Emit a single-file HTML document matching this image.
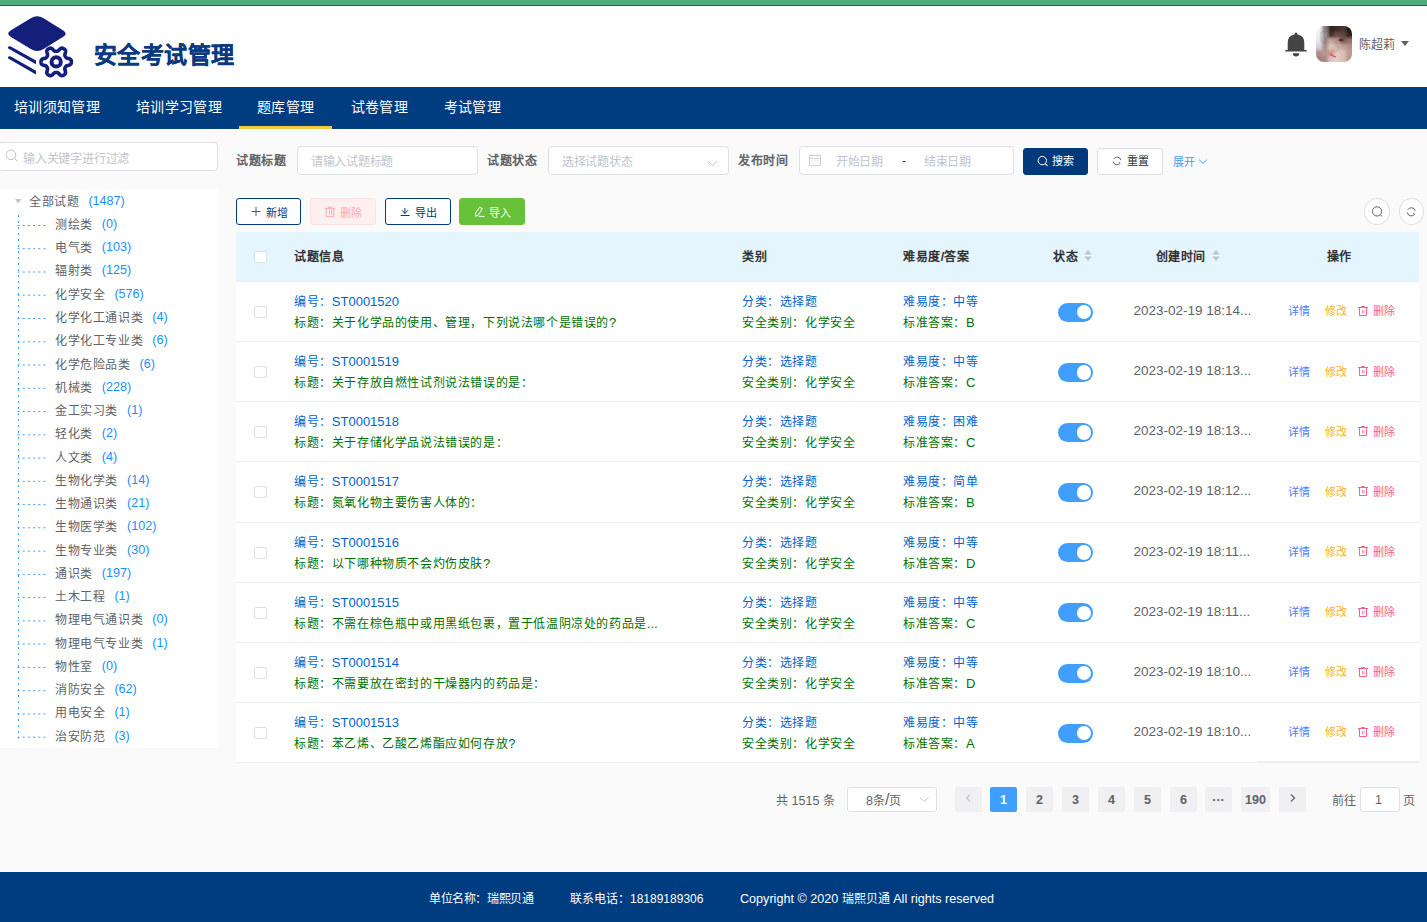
<!DOCTYPE html>
<html lang="zh-CN">
<head>
<meta charset="utf-8">
<style>
*{box-sizing:border-box;margin:0;padding:0}
html,body{width:1427px;height:922px;overflow:hidden}
body{position:relative;background:#fafafa;font-family:"Liberation Sans",sans-serif;color:#606266}
.a{position:absolute;white-space:nowrap}
svg.a{overflow:visible}
#topbar{left:0;top:0;width:1427px;height:6px;background:#50ac7a;border-bottom:1px solid #007a3a}
#hdr{left:0;top:6px;width:1427px;height:81px;background:#fff}
#nav{left:0;top:87px;width:1427px;height:42px;background:#003c80}
.nv{top:0;line-height:40px;color:#fff}
#navline{left:239px;top:126px;width:93px;height:3px;background:#f5c842}
#srch{left:-2px;top:142px;width:220px;height:29px;background:#fff;border:1px solid #dcdfe6;border-radius:4px}
#tree{left:0;top:189px;width:218px;height:559px;background:#fff}
.tr{line-height:18px;color:#606266}
.cnt{color:#1890ff;font-size:12.6px}
.lbl{font-weight:bold;color:#606266;line-height:28px;top:145.5px}
.inp{top:146px;height:28.5px;background:#fff;border:1px solid #dcdfe6;border-radius:4px}
.ph{top:146.5px;line-height:28px;color:#c0c4cc}
.btn{top:198px;height:27px;border-radius:3px;line-height:25px;border:1px solid #003a7d;background:#fff;color:#003a7d}
#tbl{left:236px;top:232px;width:1183px;height:531px;background:#fff}
#thead{left:236px;top:232px;width:1183px;height:49px;background:#e4f5fe}
.th{top:231px;line-height:49px;font-weight:bold;color:#303133}
.cb{width:12.5px;height:12px;border:1px solid #dcdfe6;border-radius:2px;background:#fff}
.rl{left:236px;width:1183px;height:1px;background:#ebeef5}
.cell{line-height:18px}
.bl{color:#0064cc}
.gr{color:#007000}
.sw{width:35px;height:19px;border-radius:10px;background:#409eff}
.sw i{position:absolute;right:2px;top:2.2px;width:14.5px;height:14.5px;border-radius:50%;background:#fff}
.dt{font-size:13.5px;color:#606266;line-height:18px}
.op{line-height:18px}
.pg{top:787px;width:27px;height:25px;background:#f0f0f2;border-radius:2px;font-size:12.6px;font-weight:bold;color:#606266;text-align:center;line-height:26px}
#footer{left:0;top:872px;width:1427px;height:50px;background:#003c80}
.ft{top:889.5px;font-size:12px;line-height:18px;color:#fff}
</style>
</head>
<body>
<div id="topbar" class="a"></div><div id="hdr" class="a"></div>
<svg class="a" style="left:0;top:0" width="90" height="87" viewBox="0 0 90 87"><path d="M10.96 30.24 L30.78 18.28 Q37.20 14.40 43.59 18.33 L62.86 30.19 Q68.40 33.60 62.88 37.03 L43.57 49.04 Q37.20 53.00 30.80 49.09 L10.95 36.99 Q5.40 33.60 10.96 30.24Z" fill="#131f7a"/><path d="M8.6 46.4 Q7.2 47.2 8.2 48.6 L36 64.2 L36 60.6 L10.8 46.6 Q9.6 46 8.6 46.4Z" fill="#131f7a"/><path d="M8.6 56.4 Q7.2 57.2 8.2 58.6 L36 74.4 L36 70.8 L10.8 56.6 Q9.6 56 8.6 56.4Z" fill="#131f7a"/><path d="M71.40 61.90 L71.39 61.50 L71.34 61.11 L71.27 60.71 L71.15 60.33 L70.97 59.96 L70.72 59.60 L70.36 59.27 L69.89 58.99 L69.31 58.75 L68.66 58.56 L68.01 58.40 L67.42 58.25 L66.94 58.10 L66.57 57.92 L66.27 57.73 L66.04 57.52 L65.85 57.30 L65.68 57.07 L65.52 56.84 L65.38 56.60 L65.25 56.36 L65.12 56.11 L65.01 55.85 L64.91 55.57 L64.85 55.26 L64.83 54.91 L64.87 54.50 L64.97 54.00 L65.13 53.42 L65.32 52.78 L65.48 52.12 L65.57 51.50 L65.56 50.95 L65.45 50.48 L65.27 50.08 L65.03 49.74 L64.76 49.45 L64.46 49.18 L64.14 48.95 L63.80 48.74 L63.45 48.55 L63.08 48.39 L62.71 48.26 L62.31 48.17 L61.90 48.14 L61.47 48.18 L61.01 48.32 L60.53 48.59 L60.03 48.97 L59.54 49.44 L59.07 49.93 L58.65 50.36 L58.28 50.70 L57.94 50.93 L57.62 51.09 L57.33 51.19 L57.04 51.25 L56.76 51.28 L56.48 51.30 L56.20 51.30 L55.92 51.30 L55.64 51.28 L55.36 51.25 L55.07 51.19 L54.78 51.09 L54.46 50.93 L54.12 50.70 L53.75 50.36 L53.33 49.93 L52.86 49.44 L52.37 48.97 L51.87 48.59 L51.39 48.32 L50.93 48.18 L50.50 48.14 L50.09 48.17 L49.69 48.26 L49.32 48.39 L48.95 48.55 L48.60 48.74 L48.26 48.95 L47.94 49.18 L47.64 49.45 L47.37 49.74 L47.13 50.08 L46.95 50.48 L46.84 50.95 L46.83 51.50 L46.92 52.12 L47.08 52.78 L47.27 53.42 L47.43 54.00 L47.53 54.50 L47.57 54.91 L47.55 55.26 L47.49 55.57 L47.39 55.85 L47.28 56.11 L47.15 56.36 L47.02 56.60 L46.88 56.84 L46.72 57.07 L46.55 57.30 L46.36 57.52 L46.13 57.73 L45.83 57.92 L45.46 58.10 L44.98 58.25 L44.39 58.40 L43.74 58.56 L43.09 58.75 L42.51 58.99 L42.04 59.27 L41.68 59.60 L41.43 59.96 L41.25 60.33 L41.13 60.71 L41.06 61.11 L41.01 61.50 L41.00 61.90 L41.01 62.30 L41.06 62.69 L41.13 63.09 L41.25 63.47 L41.43 63.84 L41.68 64.20 L42.04 64.53 L42.51 64.81 L43.09 65.05 L43.74 65.24 L44.39 65.40 L44.98 65.55 L45.46 65.70 L45.83 65.88 L46.13 66.07 L46.36 66.28 L46.55 66.50 L46.72 66.73 L46.88 66.96 L47.02 67.20 L47.15 67.44 L47.28 67.69 L47.39 67.95 L47.49 68.23 L47.55 68.54 L47.57 68.89 L47.53 69.30 L47.43 69.80 L47.27 70.38 L47.08 71.02 L46.92 71.68 L46.83 72.30 L46.84 72.85 L46.95 73.32 L47.13 73.72 L47.37 74.06 L47.64 74.35 L47.94 74.62 L48.26 74.85 L48.60 75.06 L48.95 75.25 L49.32 75.41 L49.69 75.54 L50.09 75.63 L50.50 75.66 L50.93 75.62 L51.39 75.48 L51.87 75.21 L52.37 74.83 L52.86 74.36 L53.33 73.87 L53.75 73.44 L54.12 73.10 L54.46 72.87 L54.78 72.71 L55.07 72.61 L55.36 72.55 L55.64 72.52 L55.92 72.50 L56.20 72.50 L56.48 72.50 L56.76 72.52 L57.04 72.55 L57.33 72.61 L57.62 72.71 L57.94 72.87 L58.28 73.10 L58.65 73.44 L59.07 73.87 L59.54 74.36 L60.03 74.83 L60.53 75.21 L61.01 75.48 L61.47 75.62 L61.90 75.66 L62.31 75.63 L62.71 75.54 L63.08 75.41 L63.45 75.25 L63.80 75.06 L64.14 74.85 L64.46 74.62 L64.76 74.35 L65.03 74.06 L65.27 73.72 L65.45 73.32 L65.56 72.85 L65.57 72.30 L65.48 71.68 L65.32 71.02 L65.13 70.38 L64.97 69.80 L64.87 69.30 L64.83 68.89 L64.85 68.54 L64.91 68.23 L65.01 67.95 L65.12 67.69 L65.25 67.44 L65.38 67.20 L65.52 66.96 L65.68 66.73 L65.85 66.50 L66.04 66.28 L66.27 66.07 L66.57 65.88 L66.94 65.70 L67.42 65.55 L68.01 65.40 L68.66 65.24 L69.31 65.05 L69.89 64.81 L70.36 64.53 L70.72 64.20 L70.97 63.84 L71.15 63.47 L71.27 63.09 L71.34 62.69 L71.39 62.30 L71.40 61.90Z" fill="none" stroke="#131f7a" stroke-width="3.6" stroke-linejoin="round"/><circle cx="56.2" cy="61.9" r="4.6" fill="none" stroke="#131f7a" stroke-width="4"/></svg>
<div class="a" style="left:94px;top:38px;line-height:34px;font-weight:bold;-webkit-text-stroke:0.3px #0b3a80;color:#0b3a80"><span style="font-size:23px;letter-spacing:0.4px">安全考试管理</span></div>
<svg class="a" style="left:1280px;top:28px" width="32" height="32" viewBox="0 0 32 32">
<path d="M16 4.6 Q17.5 4.6 17.6 6.6 Q24.3 7.6 24.3 14.6 L24.3 21.9 L26.7 21.9 L26.7 23.6 L5.3 23.6 L5.3 21.9 L7.7 21.9 L7.7 14.6 Q7.7 7.6 14.4 6.6 Q14.5 4.6 16 4.6Z" fill="#444"/>
<path d="M12.8 25.3 L19.2 25.3 Q19.1 28.6 16 28.6 Q12.9 28.6 12.8 25.3Z" fill="#444"/>
</svg>
<svg class="a" style="left:1316px;top:26px" width="36" height="36" viewBox="0 0 36 36">
<defs><clipPath id="av"><rect x="0" y="0" width="36" height="36" rx="8" ry="8"/></clipPath>
<filter id="bl" x="-30%" y="-30%" width="160%" height="160%"><feGaussianBlur stdDeviation="1.6"/></filter>
<filter id="bl2" x="-30%" y="-30%" width="160%" height="160%"><feGaussianBlur stdDeviation="0.5"/></filter></defs>
<g clip-path="url(#av)">
<g filter="url(#bl)"><rect x="-4" y="-4" width="10" height="10" fill="#f7f5f8"/><rect x="6" y="-4" width="6" height="10" fill="#8a7a7a"/><rect x="12" y="-4" width="6" height="10" fill="#2e201d"/><rect x="18" y="-4" width="6" height="10" fill="#3e2c28"/><rect x="24" y="-4" width="6" height="10" fill="#4a3632"/><rect x="30" y="-4" width="10" height="10" fill="#241816"/><rect x="-4" y="6" width="10" height="6" fill="#f0eef2"/><rect x="6" y="6" width="6" height="6" fill="#9a8a8a"/><rect x="12" y="6" width="6" height="6" fill="#3e2a26"/><rect x="18" y="6" width="6" height="6" fill="#6a4e48"/><rect x="24" y="6" width="6" height="6" fill="#5e463f"/><rect x="30" y="6" width="10" height="6" fill="#2e201e"/><rect x="-4" y="12" width="10" height="6" fill="#e6e4ec"/><rect x="6" y="12" width="6" height="6" fill="#9a8480"/><rect x="12" y="12" width="6" height="6" fill="#c8a8a0"/><rect x="18" y="12" width="6" height="6" fill="#b89088"/><rect x="24" y="12" width="6" height="6" fill="#7a5a55"/><rect x="30" y="12" width="10" height="6" fill="#9a7068"/><rect x="-4" y="18" width="10" height="6" fill="#d2cfda"/><rect x="6" y="18" width="6" height="6" fill="#a89088"/><rect x="12" y="18" width="6" height="6" fill="#e0c4bc"/><rect x="18" y="18" width="6" height="6" fill="#d0b4ac"/><rect x="24" y="18" width="6" height="6" fill="#c8a49a"/><rect x="30" y="18" width="10" height="6" fill="#b8908a"/><rect x="-4" y="24" width="10" height="6" fill="#b09088"/><rect x="6" y="24" width="6" height="6" fill="#b89890"/><rect x="12" y="24" width="6" height="6" fill="#d49088"/><rect x="18" y="24" width="6" height="6" fill="#e2c8c0"/><rect x="24" y="24" width="6" height="6" fill="#dcc0b8"/><rect x="30" y="24" width="10" height="6" fill="#c09a90"/><rect x="-4" y="30" width="10" height="10" fill="#a08078"/><rect x="6" y="30" width="6" height="10" fill="#a88880"/><rect x="12" y="30" width="6" height="10" fill="#d8c4c8"/><rect x="18" y="30" width="6" height="10" fill="#e4ccc6"/><rect x="24" y="30" width="6" height="10" fill="#d8bcb4"/><rect x="30" y="30" width="10" height="10" fill="#b8948c"/></g>
<g filter="url(#bl2)" fill="none">
<path d="M14.5 14 Q18 12.5 21.5 20 Q23 23 21 25 Q18 26 15 23" stroke="#8a8a90" stroke-width="0.6" opacity="0.7"/>
<path d="M22 21 L32 19.5" stroke="#9a9aa0" stroke-width="0.5"/>
<path d="M5 6 Q9 4 11 7 L9 17 Q6 18 5 15Z" stroke="#8a8088" stroke-width="0.6" opacity="0.7"/>
<path d="M14 28 Q16 30 20 31" stroke="#d84848" stroke-width="1.1"/>
<ellipse cx="25" cy="14" rx="2.4" ry="1.3" fill="#4a302c"/>
</g>
</g></svg>
<div class="a" style="left:1359px;top:35px;line-height:18px;color:#606266"><span style="font-size:12px;letter-spacing:0px">陈超莉</span></div>
<svg class="a" style="left:1400px;top:40px" width="10" height="7"><path d="M1 1 L9 1 L5 6Z" fill="#606266"/></svg>
<div id="nav" class="a">
<div class="a nv" style="left:14px"><span style="font-size:14px;letter-spacing:0.35px">培训须知管理</span></div>
<div class="a nv" style="left:136px"><span style="font-size:14px;letter-spacing:0.35px">培训学习管理</span></div>
<div class="a nv" style="left:257px"><span style="font-size:14px;letter-spacing:0.35px">题库管理</span></div>
<div class="a nv" style="left:350.5px"><span style="font-size:14px;letter-spacing:0.35px">试卷管理</span></div>
<div class="a nv" style="left:443.5px"><span style="font-size:14px;letter-spacing:0.35px">考试管理</span></div>
</div><div id="navline" class="a"></div>
<div id="srch" class="a"></div>
<svg class="a" style="left:0;top:140px" width="24" height="28"><circle cx="11" cy="14.8" r="4.8" fill="none" stroke="#c0c4cc" stroke-width="1"/><path d="M14.6 18.4 L17 20.8" stroke="#c0c4cc" stroke-width="1.1"/></svg>
<div class="a ph" style="left:23px;top:143.5px"><span style="font-size:12px;letter-spacing:-0.2px">输入关键字进行过滤</span></div>
<div id="tree" class="a"></div>
<div class="a tr" style="left:29px;top:191.70px"><span style="font-size:12px;letter-spacing:0.6px">全部试题</span><span class="cnt" style="margin-left:9px;position:relative;top:-1px">(1487)</span></div>
<div class="a tr" style="left:55px;top:214.96px"><span style="font-size:12px;letter-spacing:0.6px">测绘类</span><span class="cnt" style="margin-left:9px;position:relative;top:-1px">(0)</span></div>
<div class="a tr" style="left:55px;top:238.22px"><span style="font-size:12px;letter-spacing:0.6px">电气类</span><span class="cnt" style="margin-left:9px;position:relative;top:-1px">(103)</span></div>
<div class="a tr" style="left:55px;top:261.48px"><span style="font-size:12px;letter-spacing:0.6px">辐射类</span><span class="cnt" style="margin-left:9px;position:relative;top:-1px">(125)</span></div>
<div class="a tr" style="left:55px;top:284.74px"><span style="font-size:12px;letter-spacing:0.6px">化学安全</span><span class="cnt" style="margin-left:9px;position:relative;top:-1px">(576)</span></div>
<div class="a tr" style="left:55px;top:308.00px"><span style="font-size:12px;letter-spacing:0.6px">化学化工通识类</span><span class="cnt" style="margin-left:9px;position:relative;top:-1px">(4)</span></div>
<div class="a tr" style="left:55px;top:331.26px"><span style="font-size:12px;letter-spacing:0.6px">化学化工专业类</span><span class="cnt" style="margin-left:9px;position:relative;top:-1px">(6)</span></div>
<div class="a tr" style="left:55px;top:354.52px"><span style="font-size:12px;letter-spacing:0.6px">化学危险品类</span><span class="cnt" style="margin-left:9px;position:relative;top:-1px">(6)</span></div>
<div class="a tr" style="left:55px;top:377.78px"><span style="font-size:12px;letter-spacing:0.6px">机械类</span><span class="cnt" style="margin-left:9px;position:relative;top:-1px">(228)</span></div>
<div class="a tr" style="left:55px;top:401.04px"><span style="font-size:12px;letter-spacing:0.6px">金工实习类</span><span class="cnt" style="margin-left:9px;position:relative;top:-1px">(1)</span></div>
<div class="a tr" style="left:55px;top:424.30px"><span style="font-size:12px;letter-spacing:0.6px">轻化类</span><span class="cnt" style="margin-left:9px;position:relative;top:-1px">(2)</span></div>
<div class="a tr" style="left:55px;top:447.56px"><span style="font-size:12px;letter-spacing:0.6px">人文类</span><span class="cnt" style="margin-left:9px;position:relative;top:-1px">(4)</span></div>
<div class="a tr" style="left:55px;top:470.82px"><span style="font-size:12px;letter-spacing:0.6px">生物化学类</span><span class="cnt" style="margin-left:9px;position:relative;top:-1px">(14)</span></div>
<div class="a tr" style="left:55px;top:494.08px"><span style="font-size:12px;letter-spacing:0.6px">生物通识类</span><span class="cnt" style="margin-left:9px;position:relative;top:-1px">(21)</span></div>
<div class="a tr" style="left:55px;top:517.34px"><span style="font-size:12px;letter-spacing:0.6px">生物医学类</span><span class="cnt" style="margin-left:9px;position:relative;top:-1px">(102)</span></div>
<div class="a tr" style="left:55px;top:540.60px"><span style="font-size:12px;letter-spacing:0.6px">生物专业类</span><span class="cnt" style="margin-left:9px;position:relative;top:-1px">(30)</span></div>
<div class="a tr" style="left:55px;top:563.86px"><span style="font-size:12px;letter-spacing:0.6px">通识类</span><span class="cnt" style="margin-left:9px;position:relative;top:-1px">(197)</span></div>
<div class="a tr" style="left:55px;top:587.12px"><span style="font-size:12px;letter-spacing:0.6px">土木工程</span><span class="cnt" style="margin-left:9px;position:relative;top:-1px">(1)</span></div>
<div class="a tr" style="left:55px;top:610.38px"><span style="font-size:12px;letter-spacing:0.6px">物理电气通识类</span><span class="cnt" style="margin-left:9px;position:relative;top:-1px">(0)</span></div>
<div class="a tr" style="left:55px;top:633.64px"><span style="font-size:12px;letter-spacing:0.6px">物理电气专业类</span><span class="cnt" style="margin-left:9px;position:relative;top:-1px">(1)</span></div>
<div class="a tr" style="left:55px;top:656.90px"><span style="font-size:12px;letter-spacing:0.6px">物性室</span><span class="cnt" style="margin-left:9px;position:relative;top:-1px">(0)</span></div>
<div class="a tr" style="left:55px;top:680.16px"><span style="font-size:12px;letter-spacing:0.6px">消防安全</span><span class="cnt" style="margin-left:9px;position:relative;top:-1px">(62)</span></div>
<div class="a tr" style="left:55px;top:703.42px"><span style="font-size:12px;letter-spacing:0.6px">用电安全</span><span class="cnt" style="margin-left:9px;position:relative;top:-1px">(1)</span></div>
<div class="a tr" style="left:55px;top:726.68px"><span style="font-size:12px;letter-spacing:0.6px">治安防范</span><span class="cnt" style="margin-left:9px;position:relative;top:-1px">(3)</span></div>
<svg class="a" style="left:0;top:189px" width="218" height="559"><path d="M15 10.0 L21.5 10.0 L18.25 14.5 Z" fill="#c0c4cc"/><line x1="17.5" y1="36.5" x2="46" y2="36.5" stroke="#409eff" stroke-width="1" stroke-dasharray="2 3.2"/><line x1="17.5" y1="59.7" x2="46" y2="59.7" stroke="#409eff" stroke-width="1" stroke-dasharray="2 3.2"/><line x1="17.5" y1="83.0" x2="46" y2="83.0" stroke="#409eff" stroke-width="1" stroke-dasharray="2 3.2"/><line x1="17.5" y1="106.2" x2="46" y2="106.2" stroke="#409eff" stroke-width="1" stroke-dasharray="2 3.2"/><line x1="17.5" y1="129.5" x2="46" y2="129.5" stroke="#409eff" stroke-width="1" stroke-dasharray="2 3.2"/><line x1="17.5" y1="152.8" x2="46" y2="152.8" stroke="#409eff" stroke-width="1" stroke-dasharray="2 3.2"/><line x1="17.5" y1="176.0" x2="46" y2="176.0" stroke="#409eff" stroke-width="1" stroke-dasharray="2 3.2"/><line x1="17.5" y1="199.3" x2="46" y2="199.3" stroke="#409eff" stroke-width="1" stroke-dasharray="2 3.2"/><line x1="17.5" y1="222.5" x2="46" y2="222.5" stroke="#409eff" stroke-width="1" stroke-dasharray="2 3.2"/><line x1="17.5" y1="245.8" x2="46" y2="245.8" stroke="#409eff" stroke-width="1" stroke-dasharray="2 3.2"/><line x1="17.5" y1="269.1" x2="46" y2="269.1" stroke="#409eff" stroke-width="1" stroke-dasharray="2 3.2"/><line x1="17.5" y1="292.3" x2="46" y2="292.3" stroke="#409eff" stroke-width="1" stroke-dasharray="2 3.2"/><line x1="17.5" y1="315.6" x2="46" y2="315.6" stroke="#409eff" stroke-width="1" stroke-dasharray="2 3.2"/><line x1="17.5" y1="338.8" x2="46" y2="338.8" stroke="#409eff" stroke-width="1" stroke-dasharray="2 3.2"/><line x1="17.5" y1="362.1" x2="46" y2="362.1" stroke="#409eff" stroke-width="1" stroke-dasharray="2 3.2"/><line x1="17.5" y1="385.4" x2="46" y2="385.4" stroke="#409eff" stroke-width="1" stroke-dasharray="2 3.2"/><line x1="17.5" y1="408.6" x2="46" y2="408.6" stroke="#409eff" stroke-width="1" stroke-dasharray="2 3.2"/><line x1="17.5" y1="431.9" x2="46" y2="431.9" stroke="#409eff" stroke-width="1" stroke-dasharray="2 3.2"/><line x1="17.5" y1="455.1" x2="46" y2="455.1" stroke="#409eff" stroke-width="1" stroke-dasharray="2 3.2"/><line x1="17.5" y1="478.4" x2="46" y2="478.4" stroke="#409eff" stroke-width="1" stroke-dasharray="2 3.2"/><line x1="17.5" y1="501.7" x2="46" y2="501.7" stroke="#409eff" stroke-width="1" stroke-dasharray="2 3.2"/><line x1="17.5" y1="524.9" x2="46" y2="524.9" stroke="#409eff" stroke-width="1" stroke-dasharray="2 3.2"/><line x1="17.5" y1="548.2" x2="46" y2="548.2" stroke="#409eff" stroke-width="1" stroke-dasharray="2 3.2"/><line x1="18.5" y1="26.0" x2="18.5" y2="549.5" stroke="#409eff" stroke-width="1" stroke-dasharray="2 4"/></svg>
<div class="a lbl" style="left:236px"><span style="font-size:12px;letter-spacing:0.6px">试题标题</span></div>
<div class="a inp" style="left:297px;width:181px"></div><div class="a ph" style="left:311px"><span style="font-size:12px;letter-spacing:-0.3px">请输入试题标题</span></div>
<div class="a lbl" style="left:487px"><span style="font-size:12px;letter-spacing:0.6px">试题状态</span></div>
<div class="a inp" style="left:548px;width:181px"></div><div class="a ph" style="left:562px"><span style="font-size:12px;letter-spacing:-0.3px">选择试题状态</span></div>
<svg class="a" style="left:700px;top:150px" width="24" height="20"><path d="M8 11 L12.5 15.5 L17 11" fill="none" stroke="#c0c4cc" stroke-width="1"/></svg>
<div class="a lbl" style="left:738px"><span style="font-size:12px;letter-spacing:0.6px">发布时间</span></div>
<div class="a inp" style="left:799px;width:215px"></div>
<svg class="a" style="left:806px;top:150px" width="18" height="20"><g fill="none" stroke="#cfd2d9" stroke-width="1"><rect x="3.5" y="5.5" width="11" height="10"/><path d="M3.5 8.5 H14.5 M6.5 4 V6.5 M11.5 4 V6.5"/></g><g fill="#cfd2d9"><rect x="5.5" y="10" width="1" height="1"/><rect x="8.5" y="10" width="1" height="1"/><rect x="11.5" y="10" width="1" height="1"/><rect x="5.5" y="12.5" width="1" height="1"/><rect x="8.5" y="12.5" width="1" height="1"/><rect x="11.5" y="12.5" width="1" height="1"/></g></svg>
<div class="a ph" style="left:836px"><span style="font-size:12px;letter-spacing:-0.3px">开始日期</span></div><div class="a ph" style="left:902px;color:#303133;font-size:12px">-</div><div class="a ph" style="left:924px"><span style="font-size:12px;letter-spacing:-0.3px">结束日期</span></div>
<div class="a btn" style="left:1023px;top:148px;width:65px;background:#003a7d;color:#fff"><span class="a" style="left:28px;top:-2px;font-weight:500"><span style="font-size:11px;letter-spacing:0px">搜索</span></span></div>
<svg class="a" style="left:1034px;top:152px" width="16" height="18"><circle cx="8.3" cy="8.6" r="4.2" fill="none" stroke="#fff" stroke-width="1"/><path d="M11.3 11.6 L13.5 13.8" stroke="#fff" stroke-width="1.1"/></svg>
<div class="a btn" style="left:1097px;top:148px;width:66px;border-color:#dcdfe6;color:#606266"><span class="a" style="left:29px;top:-2px;color:#303133"><span style="font-size:11px;letter-spacing:0px">重置</span></span></div>
<svg class="a" style="left:1110px;top:154px" width="14" height="14"><g fill="none" stroke="#606266" stroke-width="1"><path d="M3.62 5.05 A3.9 3.9 0 0 1 10.77 5.99 M3.16 7.68 A3.9 3.9 0 0 0 10.19 9.24 L8.79 8.24"/></g></svg>
<div class="a" style="left:1173px;top:146.5px;line-height:28px;color:#409eff"><span style="font-size:11px;letter-spacing:0px">展开</span></div>
<svg class="a" style="left:1196px;top:156px" width="14" height="10"><path d="M3 3.6 L7 7.4 L11 3.6" fill="none" stroke="#409eff" stroke-width="1"/></svg>
<div class="a btn" style="left:236px;width:65px;"><span class="a" style="left:29px;top:-0.5px;font-weight:500"><span style="font-size:11px;letter-spacing:0px">新增</span></span></div>
<svg class="a" style="left:248px;top:204px" width="16" height="16"><path d="M3.6 7.5 H12.5 M8 3 V12" stroke="#003a7d" stroke-width="0.8"/></svg>
<div class="a btn" style="left:310px;width:66px;background:#fef0f0;border-color:#fde2e2;color:#f9a9a9"><span class="a" style="left:29px;top:0"><span style="font-size:11px;letter-spacing:0px">删除</span></span></div>
<svg class="a" style="left:320px;top:200px" width="20" height="22"><g fill="none" stroke="#f9a9a9" stroke-width="1"><path d="M5.1 8.4 H14.9 M8.1 8.3 V7.2 H11.9 V8.3"/><path d="M6.3 8.4 V16.7 H13.8 V8.4"/><path d="M9.5 10 V14.5 M11.5 10 V14.5"/></g></svg>
<div class="a btn" style="left:385px;width:66px;"><span class="a" style="left:29px;top:-0.5px;font-weight:500"><span style="font-size:11px;letter-spacing:0px">导出</span></span></div>
<svg class="a" style="left:395px;top:200px" width="20" height="22"><g fill="none" stroke="#003a7d" stroke-width="1"><path d="M9.9 7.9 V13.6 M6.9 10.3 L9.9 13.4 L12.9 10.3"/><path d="M5.7 15.5 H14.6"/></g></svg>
<div class="a btn" style="left:459px;width:66px;background:#67c23a;border-color:#67c23a;color:#fff"><span class="a" style="left:29px;top:-0.5px;font-weight:500"><span style="font-size:11px;letter-spacing:0px">导入</span></span></div>
<svg class="a" style="left:470px;top:200px" width="20" height="22"><g fill="none" stroke="#fff" stroke-width="1"><path d="M5.5 16.3 L5.6 13 L9.6 7.2 L12.4 8.6 L8.2 15.2Z"/><path d="M8.6 16.4 H14.6"/></g></svg>
<div class="a" style="left:1364px;top:198px;width:26px;height:26.5px;border:1px solid #dcdfe6;border-radius:50%;background:#fff"></div>
<div class="a" style="left:1399px;top:198px;width:25px;height:26.5px;border:1px solid #dcdfe6;border-radius:50%;background:#fff"></div>
<svg class="a" style="left:1364px;top:198px" width="64" height="27"><g fill="none" stroke="#606266" stroke-width="1"><circle cx="13" cy="13.4" r="4.6"/><path d="M16.3 16.7 L18.2 18.5"/><path d="M43.75 11.75 A4.1 4.1 0 0 1 51.26 12.74 M43.26 14.51 A4.1 4.1 0 0 0 50.66 16.15 L49.26 15.15"/></g></svg>
<div id="tbl" class="a"></div><div id="thead" class="a"></div><div class="a rl" style="top:281px"></div>
<div class="a cb" style="left:254.3px;top:251.3px"></div>
<div class="a th" style="left:294px"><span style="font-size:12px;letter-spacing:0.6px">试题信息</span></div>
<div class="a th" style="left:742px"><span style="font-size:12px;letter-spacing:0.6px">类别</span></div>
<div class="a th" style="left:903px"><span style="font-size:12px;letter-spacing:0.6px">难易度</span><span style="font-size:12.6px">/</span><span style="font-size:12px;letter-spacing:0.6px">答案</span></div>
<div class="a th" style="left:1053px"><span style="font-size:12px;letter-spacing:0.6px">状态</span></div>
<div class="a th" style="left:1155.5px"><span style="font-size:12px;letter-spacing:0.6px">创建时间</span></div>
<div class="a th" style="left:1326.5px"><span style="font-size:12px;letter-spacing:0.6px">操作</span></div>
<svg class="a" style="left:1084px;top:248px" width="10" height="16"><path d="M0.2 6.6 L7.8 6.6 L4 2Z M0.2 8.6 L7.8 8.6 L4 13Z" fill="#c0c4cc"/></svg>
<svg class="a" style="left:1212px;top:248px" width="10" height="16"><path d="M0.2 6.6 L7.8 6.6 L4 2Z M0.2 8.6 L7.8 8.6 L4 13Z" fill="#c0c4cc"/></svg>
<div class="a rl" style="top:341px"></div>
<div class="a cb" style="left:254.3px;top:306.0px"></div>
<div class="a cell bl" style="left:294px;top:292.0px"><span style="font-size:12px;letter-spacing:0.6px">编号：</span><span style="font-size:13px">ST0001520</span></div>
<div class="a cell gr" style="left:294px;top:313.0px"><span style="font-size:12px;letter-spacing:0.6px">标题：关于化学品的使用、管理，下列说法哪个是错误的</span><span style="font-size:13px">?</span></div>
<div class="a cell bl" style="left:742px;top:292.0px"><span style="font-size:12px;letter-spacing:0.6px">分类：选择题</span></div>
<div class="a cell gr" style="left:742px;top:313.0px"><span style="font-size:12px;letter-spacing:0.6px">安全类别：化学安全</span></div>
<div class="a cell bl" style="left:903px;top:292.0px"><span style="font-size:12px;letter-spacing:0.6px">难易度：中等</span></div>
<div class="a cell gr" style="left:903px;top:313.0px"><span style="font-size:12px;letter-spacing:0.6px">标准答案：</span><span style="font-size:13px">B</span></div>
<div class="a sw" style="left:1058px;top:302.8px"><i></i></div>
<div class="a dt" style="left:1133.5px;top:302.0px">2023-02-19 18:14...</div>
<div class="a op" style="left:1288px;top:301.4px;color:#4a7bff"><span style="font-size:11px;letter-spacing:0px">详情</span></div>
<div class="a op" style="left:1325px;top:301.4px;color:#fbb020"><span style="font-size:11px;letter-spacing:0px">修改</span></div>
<svg class="a" style="left:1350px;top:300px" width="20" height="20"><g fill="none" stroke="#f7638a" stroke-width="1"><path d="M8 7.5 H18 M11.5 7 V6.5 H14.5 V7"/><path d="M9.5 7.5 V15.5 H16.5 V7.5"/><path d="M12.5 10 V13.5 M14 10 V13.5" stroke-width="0.7"/></g></svg>
<div class="a op" style="left:1373px;top:301.4px;color:#f7638a"><span style="font-size:11px;letter-spacing:0px">删除</span></div>
<div class="a rl" style="top:401px"></div>
<div class="a cb" style="left:254.3px;top:366.1px"></div>
<div class="a cell bl" style="left:294px;top:352.1px"><span style="font-size:12px;letter-spacing:0.6px">编号：</span><span style="font-size:13px">ST0001519</span></div>
<div class="a cell gr" style="left:294px;top:373.1px"><span style="font-size:12px;letter-spacing:0.6px">标题：关于存放自燃性试剂说法错误的是：</span></div>
<div class="a cell bl" style="left:742px;top:352.1px"><span style="font-size:12px;letter-spacing:0.6px">分类：选择题</span></div>
<div class="a cell gr" style="left:742px;top:373.1px"><span style="font-size:12px;letter-spacing:0.6px">安全类别：化学安全</span></div>
<div class="a cell bl" style="left:903px;top:352.1px"><span style="font-size:12px;letter-spacing:0.6px">难易度：中等</span></div>
<div class="a cell gr" style="left:903px;top:373.1px"><span style="font-size:12px;letter-spacing:0.6px">标准答案：</span><span style="font-size:13px">C</span></div>
<div class="a sw" style="left:1058px;top:362.9px"><i></i></div>
<div class="a dt" style="left:1133.5px;top:362.1px">2023-02-19 18:13...</div>
<div class="a op" style="left:1288px;top:361.5px;color:#4a7bff"><span style="font-size:11px;letter-spacing:0px">详情</span></div>
<div class="a op" style="left:1325px;top:361.5px;color:#fbb020"><span style="font-size:11px;letter-spacing:0px">修改</span></div>
<svg class="a" style="left:1350px;top:360px" width="20" height="20"><g fill="none" stroke="#f7638a" stroke-width="1"><path d="M8 7.5 H18 M11.5 7 V6.5 H14.5 V7"/><path d="M9.5 7.5 V15.5 H16.5 V7.5"/><path d="M12.5 10 V13.5 M14 10 V13.5" stroke-width="0.7"/></g></svg>
<div class="a op" style="left:1373px;top:361.5px;color:#f7638a"><span style="font-size:11px;letter-spacing:0px">删除</span></div>
<div class="a rl" style="top:461px"></div>
<div class="a cb" style="left:254.3px;top:426.2px"></div>
<div class="a cell bl" style="left:294px;top:412.2px"><span style="font-size:12px;letter-spacing:0.6px">编号：</span><span style="font-size:13px">ST0001518</span></div>
<div class="a cell gr" style="left:294px;top:433.2px"><span style="font-size:12px;letter-spacing:0.6px">标题：关于存储化学品说法错误的是：</span></div>
<div class="a cell bl" style="left:742px;top:412.2px"><span style="font-size:12px;letter-spacing:0.6px">分类：选择题</span></div>
<div class="a cell gr" style="left:742px;top:433.2px"><span style="font-size:12px;letter-spacing:0.6px">安全类别：化学安全</span></div>
<div class="a cell bl" style="left:903px;top:412.2px"><span style="font-size:12px;letter-spacing:0.6px">难易度：困难</span></div>
<div class="a cell gr" style="left:903px;top:433.2px"><span style="font-size:12px;letter-spacing:0.6px">标准答案：</span><span style="font-size:13px">C</span></div>
<div class="a sw" style="left:1058px;top:423.1px"><i></i></div>
<div class="a dt" style="left:1133.5px;top:422.2px">2023-02-19 18:13...</div>
<div class="a op" style="left:1288px;top:421.6px;color:#4a7bff"><span style="font-size:11px;letter-spacing:0px">详情</span></div>
<div class="a op" style="left:1325px;top:421.6px;color:#fbb020"><span style="font-size:11px;letter-spacing:0px">修改</span></div>
<svg class="a" style="left:1350px;top:420px" width="20" height="20"><g fill="none" stroke="#f7638a" stroke-width="1"><path d="M8 7.5 H18 M11.5 7 V6.5 H14.5 V7"/><path d="M9.5 7.5 V15.5 H16.5 V7.5"/><path d="M12.5 10 V13.5 M14 10 V13.5" stroke-width="0.7"/></g></svg>
<div class="a op" style="left:1373px;top:421.6px;color:#f7638a"><span style="font-size:11px;letter-spacing:0px">删除</span></div>
<div class="a rl" style="top:522px"></div>
<div class="a cb" style="left:254.3px;top:486.4px"></div>
<div class="a cell bl" style="left:294px;top:472.4px"><span style="font-size:12px;letter-spacing:0.6px">编号：</span><span style="font-size:13px">ST0001517</span></div>
<div class="a cell gr" style="left:294px;top:493.4px"><span style="font-size:12px;letter-spacing:0.6px">标题：氮氧化物主要伤害人体的：</span></div>
<div class="a cell bl" style="left:742px;top:472.4px"><span style="font-size:12px;letter-spacing:0.6px">分类：选择题</span></div>
<div class="a cell gr" style="left:742px;top:493.4px"><span style="font-size:12px;letter-spacing:0.6px">安全类别：化学安全</span></div>
<div class="a cell bl" style="left:903px;top:472.4px"><span style="font-size:12px;letter-spacing:0.6px">难易度：简单</span></div>
<div class="a cell gr" style="left:903px;top:493.4px"><span style="font-size:12px;letter-spacing:0.6px">标准答案：</span><span style="font-size:13px">B</span></div>
<div class="a sw" style="left:1058px;top:483.2px"><i></i></div>
<div class="a dt" style="left:1133.5px;top:482.4px">2023-02-19 18:12...</div>
<div class="a op" style="left:1288px;top:481.8px;color:#4a7bff"><span style="font-size:11px;letter-spacing:0px">详情</span></div>
<div class="a op" style="left:1325px;top:481.8px;color:#fbb020"><span style="font-size:11px;letter-spacing:0px">修改</span></div>
<svg class="a" style="left:1350px;top:480px" width="20" height="20"><g fill="none" stroke="#f7638a" stroke-width="1"><path d="M8 7.5 H18 M11.5 7 V6.5 H14.5 V7"/><path d="M9.5 7.5 V15.5 H16.5 V7.5"/><path d="M12.5 10 V13.5 M14 10 V13.5" stroke-width="0.7"/></g></svg>
<div class="a op" style="left:1373px;top:481.8px;color:#f7638a"><span style="font-size:11px;letter-spacing:0px">删除</span></div>
<div class="a rl" style="top:582px"></div>
<div class="a cb" style="left:254.3px;top:546.5px"></div>
<div class="a cell bl" style="left:294px;top:532.5px"><span style="font-size:12px;letter-spacing:0.6px">编号：</span><span style="font-size:13px">ST0001516</span></div>
<div class="a cell gr" style="left:294px;top:553.5px"><span style="font-size:12px;letter-spacing:0.6px">标题：以下哪种物质不会灼伤皮肤</span><span style="font-size:13px">?</span></div>
<div class="a cell bl" style="left:742px;top:532.5px"><span style="font-size:12px;letter-spacing:0.6px">分类：选择题</span></div>
<div class="a cell gr" style="left:742px;top:553.5px"><span style="font-size:12px;letter-spacing:0.6px">安全类别：化学安全</span></div>
<div class="a cell bl" style="left:903px;top:532.5px"><span style="font-size:12px;letter-spacing:0.6px">难易度：中等</span></div>
<div class="a cell gr" style="left:903px;top:553.5px"><span style="font-size:12px;letter-spacing:0.6px">标准答案：</span><span style="font-size:13px">D</span></div>
<div class="a sw" style="left:1058px;top:543.3px"><i></i></div>
<div class="a dt" style="left:1133.5px;top:542.5px">2023-02-19 18:11...</div>
<div class="a op" style="left:1288px;top:541.9px;color:#4a7bff"><span style="font-size:11px;letter-spacing:0px">详情</span></div>
<div class="a op" style="left:1325px;top:541.9px;color:#fbb020"><span style="font-size:11px;letter-spacing:0px">修改</span></div>
<svg class="a" style="left:1350px;top:540px" width="20" height="20"><g fill="none" stroke="#f7638a" stroke-width="1"><path d="M8 7.5 H18 M11.5 7 V6.5 H14.5 V7"/><path d="M9.5 7.5 V15.5 H16.5 V7.5"/><path d="M12.5 10 V13.5 M14 10 V13.5" stroke-width="0.7"/></g></svg>
<div class="a op" style="left:1373px;top:541.9px;color:#f7638a"><span style="font-size:11px;letter-spacing:0px">删除</span></div>
<div class="a rl" style="top:642px"></div>
<div class="a cb" style="left:254.3px;top:606.6px"></div>
<div class="a cell bl" style="left:294px;top:592.6px"><span style="font-size:12px;letter-spacing:0.6px">编号：</span><span style="font-size:13px">ST0001515</span></div>
<div class="a cell gr" style="left:294px;top:613.6px"><span style="font-size:12px;letter-spacing:0.6px">标题：不需在棕色瓶中或用黑纸包裹，置于低温阴凉处的药品是</span><span style="font-size:13px">...</span></div>
<div class="a cell bl" style="left:742px;top:592.6px"><span style="font-size:12px;letter-spacing:0.6px">分类：选择题</span></div>
<div class="a cell gr" style="left:742px;top:613.6px"><span style="font-size:12px;letter-spacing:0.6px">安全类别：化学安全</span></div>
<div class="a cell bl" style="left:903px;top:592.6px"><span style="font-size:12px;letter-spacing:0.6px">难易度：中等</span></div>
<div class="a cell gr" style="left:903px;top:613.6px"><span style="font-size:12px;letter-spacing:0.6px">标准答案：</span><span style="font-size:13px">C</span></div>
<div class="a sw" style="left:1058px;top:603.4px"><i></i></div>
<div class="a dt" style="left:1133.5px;top:602.6px">2023-02-19 18:11...</div>
<div class="a op" style="left:1288px;top:602.0px;color:#4a7bff"><span style="font-size:11px;letter-spacing:0px">详情</span></div>
<div class="a op" style="left:1325px;top:602.0px;color:#fbb020"><span style="font-size:11px;letter-spacing:0px">修改</span></div>
<svg class="a" style="left:1350px;top:601px" width="20" height="20"><g fill="none" stroke="#f7638a" stroke-width="1"><path d="M8 7.5 H18 M11.5 7 V6.5 H14.5 V7"/><path d="M9.5 7.5 V15.5 H16.5 V7.5"/><path d="M12.5 10 V13.5 M14 10 V13.5" stroke-width="0.7"/></g></svg>
<div class="a op" style="left:1373px;top:602.0px;color:#f7638a"><span style="font-size:11px;letter-spacing:0px">删除</span></div>
<div class="a rl" style="top:702px"></div>
<div class="a cb" style="left:254.3px;top:666.8px"></div>
<div class="a cell bl" style="left:294px;top:652.8px"><span style="font-size:12px;letter-spacing:0.6px">编号：</span><span style="font-size:13px">ST0001514</span></div>
<div class="a cell gr" style="left:294px;top:673.8px"><span style="font-size:12px;letter-spacing:0.6px">标题：不需要放在密封的干燥器内的药品是：</span></div>
<div class="a cell bl" style="left:742px;top:652.8px"><span style="font-size:12px;letter-spacing:0.6px">分类：选择题</span></div>
<div class="a cell gr" style="left:742px;top:673.8px"><span style="font-size:12px;letter-spacing:0.6px">安全类别：化学安全</span></div>
<div class="a cell bl" style="left:903px;top:652.8px"><span style="font-size:12px;letter-spacing:0.6px">难易度：中等</span></div>
<div class="a cell gr" style="left:903px;top:673.8px"><span style="font-size:12px;letter-spacing:0.6px">标准答案：</span><span style="font-size:13px">D</span></div>
<div class="a sw" style="left:1058px;top:663.5px"><i></i></div>
<div class="a dt" style="left:1133.5px;top:662.8px">2023-02-19 18:10...</div>
<div class="a op" style="left:1288px;top:662.1px;color:#4a7bff"><span style="font-size:11px;letter-spacing:0px">详情</span></div>
<div class="a op" style="left:1325px;top:662.1px;color:#fbb020"><span style="font-size:11px;letter-spacing:0px">修改</span></div>
<svg class="a" style="left:1350px;top:661px" width="20" height="20"><g fill="none" stroke="#f7638a" stroke-width="1"><path d="M8 7.5 H18 M11.5 7 V6.5 H14.5 V7"/><path d="M9.5 7.5 V15.5 H16.5 V7.5"/><path d="M12.5 10 V13.5 M14 10 V13.5" stroke-width="0.7"/></g></svg>
<div class="a op" style="left:1373px;top:662.1px;color:#f7638a"><span style="font-size:11px;letter-spacing:0px">删除</span></div>
<div class="a rl" style="top:762px"></div>
<div class="a cb" style="left:254.3px;top:726.9px"></div>
<div class="a cell bl" style="left:294px;top:712.9px"><span style="font-size:12px;letter-spacing:0.6px">编号：</span><span style="font-size:13px">ST0001513</span></div>
<div class="a cell gr" style="left:294px;top:733.9px"><span style="font-size:12px;letter-spacing:0.6px">标题：苯乙烯、乙酸乙烯酯应如何存放</span><span style="font-size:13px">?</span></div>
<div class="a cell bl" style="left:742px;top:712.9px"><span style="font-size:12px;letter-spacing:0.6px">分类：选择题</span></div>
<div class="a cell gr" style="left:742px;top:733.9px"><span style="font-size:12px;letter-spacing:0.6px">安全类别：化学安全</span></div>
<div class="a cell bl" style="left:903px;top:712.9px"><span style="font-size:12px;letter-spacing:0.6px">难易度：中等</span></div>
<div class="a cell gr" style="left:903px;top:733.9px"><span style="font-size:12px;letter-spacing:0.6px">标准答案：</span><span style="font-size:13px">A</span></div>
<div class="a sw" style="left:1058px;top:723.7px"><i></i></div>
<div class="a dt" style="left:1133.5px;top:722.9px">2023-02-19 18:10...</div>
<div class="a op" style="left:1288px;top:722.3px;color:#4a7bff"><span style="font-size:11px;letter-spacing:0px">详情</span></div>
<div class="a op" style="left:1325px;top:722.3px;color:#fbb020"><span style="font-size:11px;letter-spacing:0px">修改</span></div>
<svg class="a" style="left:1350px;top:721px" width="20" height="20"><g fill="none" stroke="#f7638a" stroke-width="1"><path d="M8 7.5 H18 M11.5 7 V6.5 H14.5 V7"/><path d="M9.5 7.5 V15.5 H16.5 V7.5"/><path d="M12.5 10 V13.5 M14 10 V13.5" stroke-width="0.7"/></g></svg>
<div class="a op" style="left:1373px;top:722.3px;color:#f7638a"><span style="font-size:11px;letter-spacing:0px">删除</span></div>
<div class="a" style="left:1258px;top:761px;width:161px;height:1px;background:#ebeef5"></div>
<div class="a" style="left:776px;top:790px;line-height:20px;color:#606266"><span style="font-size:12px;letter-spacing:0px">共</span><span style="font-size:12.6px"> 1515 </span><span style="font-size:12px;letter-spacing:0px">条</span></div>
<div class="a inp" style="left:847px;top:787px;width:90px;height:25px;border-radius:3px"></div>
<div class="a" style="left:866px;top:790px;line-height:20px;color:#606266"><span style="font-size:12.6px">8</span><span style="font-size:12px;letter-spacing:0px">条</span>/<span style="font-size:12px;letter-spacing:0px">页</span></div>
<svg class="a" style="left:917px;top:793px" width="16" height="14"><path d="M3 4.5 L7.2 8.5 L11.4 4.5" fill="none" stroke="#c0c4cc" stroke-width="1"/></svg>
<div class="a pg" style="left:955px"></div>
<svg class="a" style="left:955px;top:787px" width="27" height="25"><path d="M15 7.5 L11.5 11 L15 14.5" fill="none" stroke="#c0c4cc" stroke-width="1.2"/></svg>
<div class="a pg" style="left:990px;background:#409eff;color:#fff">1</div>
<div class="a pg" style="left:1026px">2</div>
<div class="a pg" style="left:1062px">3</div>
<div class="a pg" style="left:1098px">4</div>
<div class="a pg" style="left:1134px">5</div>
<div class="a pg" style="left:1170px">6</div>
<div class="a pg" style="left:1205px">···</div>
<div class="a pg" style="left:1241px;width:29px">190</div>
<div class="a pg" style="left:1279px"></div>
<svg class="a" style="left:1279px;top:787px" width="27" height="25"><path d="M12 7.5 L15.5 11 L12 14.5" fill="none" stroke="#606266" stroke-width="1.2"/></svg>
<div class="a" style="left:1332px;top:790px;line-height:20px;color:#606266"><span style="font-size:12px;letter-spacing:0px">前往</span></div>
<div class="a inp" style="left:1359.5px;top:787px;width:40px;height:25px;border-radius:3px"></div>
<div class="a" style="left:1375px;top:790px;line-height:20px;color:#606266;font-size:12.6px">1</div>
<div class="a" style="left:1403px;top:790px;line-height:20px;color:#606266"><span style="font-size:12px;letter-spacing:0px">页</span></div>
<div id="footer" class="a"></div>
<div class="a ft" style="left:429px"><span style="font-size:12px;letter-spacing:-0.4px">单位名称：瑞熙贝通</span></div>
<div class="a ft" style="left:570px"><span style="font-size:12px;letter-spacing:0px">联系电话：</span><span style="font-size:12px">18189189306</span></div>
<div class="a ft" style="left:740px"><span style="font-size:12.6px">Copyright © 2020 </span><span style="font-size:12px;letter-spacing:0px">瑞熙贝通</span><span style="font-size:12.6px"> All rights reserved</span></div>
</body>
</html>
